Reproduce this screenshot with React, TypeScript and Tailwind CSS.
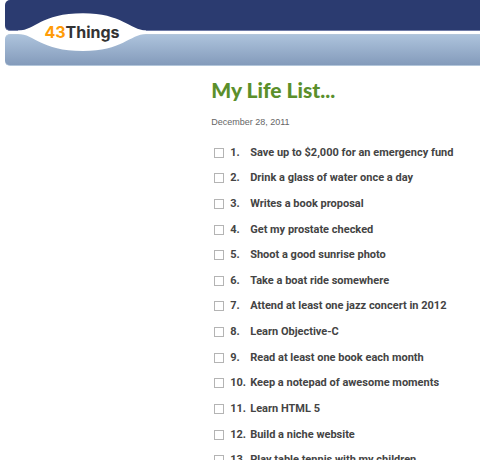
import React, { useState } from 'react'

const goals = [
  'Save up to $2,000 for an emergency fund',
  'Drink a glass of water once a day',
  'Writes a book proposal',
  'Get my prostate checked',
  'Shoot a good sunrise photo',
  'Take a boat ride somewhere',
  'Attend at least one jazz concert in 2012',
  'Learn Objective-C',
  'Read at least one book each month',
  'Keep a notepad of awesome moments',
  'Learn HTML 5',
  'Build a niche website',
  'Play table tennis with my children'
]

const Header: React.FC = () => (
  <header className="relative pl-[5px]">
    <div className="h-[31px] rounded-l-[5px] border-b border-[#6f7ba6] bg-[#2b3b70]" />
    <div className="mt-[3px] h-8 rounded-l-[5px] border-y border-[#b3c6da] bg-linear-to-b from-[#adc3dc] to-[#849bbb]" />
    <a href="/" className="absolute top-3 left-[18px] flex h-10 w-32 items-center justify-center">
      <svg className="absolute inset-0 h-full w-full" viewBox="0 0 128 40" aria-hidden="true">
        <path
          d="M0 18.5 C17 19 22 1.3 65 1.3 C104 1.3 112 18 128 18.5 V22 C112 22.5 104 39 65 39 C22 39 17 22 0 22 Z"
          fill="#fff"
        />
      </svg>
      <span className="relative font-['Inter',sans-serif] text-[16px] leading-5 font-bold text-[#333]">
        <span className="text-[#ff9c08]">43</span>Things
      </span>
    </a>
  </header>
)

interface GoalItemProps {
  number: number
  label: string
  checked: boolean
  onToggle: () => void
}

const GoalItem: React.FC<GoalItemProps> = ({ number, label, checked, onToggle }) => (
  <li className="flex items-center">
    <label className="flex items-center font-['Roboto',sans-serif] text-[11px] leading-4 font-bold text-[#444]">
      <input
        type="checkbox"
        checked={checked}
        onChange={onToggle}
        className="mr-[6px] h-[10px] w-[10px] appearance-none border border-[#b4b4b4] bg-white checked:bg-[#5b8f2b]"
      />
      <span className="w-5">{number}.</span>
      <span>{label}</span>
    </label>
  </li>
)

export default function App() {
  const [done, setDone] = useState<number[]>([])

  const toggle = (index: number) => {
    setDone(done.includes(index) ? done.filter((i) => i !== index) : [...done, index])
  }

  return (
    <div className="bg-white font-['Liberation_Sans',Arial,sans-serif]">
      <Header />
      <main className="pt-2 pl-[44%]">
        <h1 className="font-['Lato',sans-serif] text-[21px] leading-8 font-black text-[#5b8f2b]">
          My Life List...
        </h1>
        <p className="mt-2 text-[9px] leading-4 text-[#666]">December 28, 2011</p>
        <ol className="mt-[10px] grid min-h-[333px] auto-rows-fr pl-[3px]">
          {goals.map((goal, index) => (
            <GoalItem
              key={goal}
              number={index + 1}
              label={goal}
              checked={done.includes(index)}
              onToggle={() => toggle(index)}
            />
          ))}
        </ol>
      </main>
    </div>
  )
}
